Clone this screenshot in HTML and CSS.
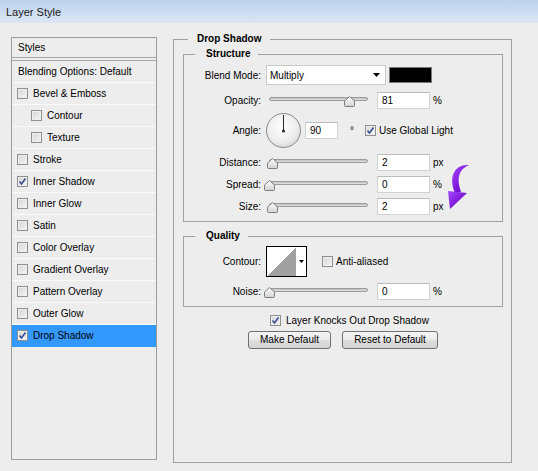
FILE: index.html
```html
<!DOCTYPE html>
<html>
<head>
<meta charset="utf-8">
<title>Layer Style</title>
<link rel="stylesheet" href="styles.css">
</head>
<body>
<div class="titlebar">Layer Style</div>
<div class="main">
  <div class="sidebar">
    <div class="side-head">Styles</div>
    <div class="side-item blend">Blending Options: Default</div>
    <div class="side-item"><span class="cb"></span>Bevel &amp; Emboss</div>
    <div class="side-item sub"><span class="cb"></span>Contour</div>
    <div class="side-item sub"><span class="cb"></span>Texture</div>
    <div class="side-item"><span class="cb"></span>Stroke</div>
    <div class="side-item"><span class="cb"><svg class="tick" width="9" height="9" viewBox="0 0 9 9"><path d="M1.5 4.5 L3.5 7 L7.5 1.5" fill="none" stroke="#3a4e96" stroke-width="1.6"/></svg></span>Inner Shadow</div>
    <div class="side-item"><span class="cb"></span>Inner Glow</div>
    <div class="side-item"><span class="cb"></span>Satin</div>
    <div class="side-item"><span class="cb"></span>Color Overlay</div>
    <div class="side-item"><span class="cb"></span>Gradient Overlay</div>
    <div class="side-item"><span class="cb"></span>Pattern Overlay</div>
    <div class="side-item"><span class="cb"></span>Outer Glow</div>
    <div class="side-item selected"><span class="cb"><svg class="tick" width="9" height="9" viewBox="0 0 9 9"><path d="M1.5 4.5 L3.5 7 L7.5 1.5" fill="none" stroke="#3a4e96" stroke-width="1.6"/></svg></span>Drop Shadow</div>
  </div>

  <fieldset class="group outer">
    <legend>Drop Shadow</legend>
    <div class="outer-body">
      <fieldset class="group inner structure">
        <legend>Structure</legend>
        <div class="inner-body">
          <div class="row r-blend">
            <span class="lbl">Blend Mode:</span>
            <div class="select"><span>Multiply</span><svg width="7" height="4" viewBox="0 0 7 4"><path d="M0 0 H7 L3.5 4 Z" fill="#000"/></svg></div>
            <div class="swatch"></div>
          </div>
          <div class="row r-slider r-opacity">
            <span class="lbl">Opacity:</span>
            <div class="slider"><div class="track"></div><svg class="thumb" style="left:78px" width="11" height="11" viewBox="0 0 11 11"><defs><linearGradient id="tg1" x1="0" y1="0" x2="0" y2="1"><stop offset="0" stop-color="#ffffff"/><stop offset="1" stop-color="#d2d2d2"/></linearGradient></defs><path d="M5.5 0.5 L10.5 5 L10.5 9.5 Q10.5 10.5 9.5 10.5 L1.5 10.5 Q0.5 10.5 0.5 9.5 L0.5 5 Z" fill="url(#tg1)" stroke="#7c7c7c"/></svg></div>
            <div class="num">81</div>
            <span class="unit">%</span>
          </div>
          <div class="row r-angle">
            <span class="lbl">Angle:</span>
            <svg class="dial" width="35" height="35" viewBox="0 0 35 35"><defs><radialGradient id="dg" cx="0.45" cy="0.4" r="0.65"><stop offset="0" stop-color="#ffffff"/><stop offset="0.7" stop-color="#ececec"/><stop offset="1" stop-color="#d4d4d4"/></radialGradient></defs><circle cx="17.5" cy="17.5" r="17" fill="url(#dg)" stroke="#8a8a8a"/><line x1="17.5" y1="2" x2="17.5" y2="17.5" stroke="#2a2a2a" stroke-width="1"/><circle cx="17.5" cy="18" r="1.6" fill="#2a2a2a"/></svg>
            <div class="num num-angle">90</div>
            <span class="deg">°</span>
            <span class="cb cb-global"><svg class="tick" width="9" height="9" viewBox="0 0 9 9"><path d="M1.5 4.5 L3.5 7 L7.5 1.5" fill="none" stroke="#3a4e96" stroke-width="1.6"/></svg></span>
            <span class="cb-label">Use Global Light</span>
          </div>
          <div class="row r-slider r-distance">
            <span class="lbl">Distance:</span>
            <div class="slider"><div class="track"></div><svg class="thumb" style="left:1px" width="11" height="11" viewBox="0 0 11 11"><path d="M5.5 0.5 L10.5 5 L10.5 9.5 Q10.5 10.5 9.5 10.5 L1.5 10.5 Q0.5 10.5 0.5 9.5 L0.5 5 Z" fill="url(#tg1)" stroke="#7c7c7c"/></svg></div>
            <div class="num">2</div>
            <span class="unit">px</span>
          </div>
          <div class="row r-slider">
            <span class="lbl">Spread:</span>
            <div class="slider"><div class="track"></div><svg class="thumb" style="left:-2px" width="11" height="11" viewBox="0 0 11 11"><path d="M5.5 0.5 L10.5 5 L10.5 9.5 Q10.5 10.5 9.5 10.5 L1.5 10.5 Q0.5 10.5 0.5 9.5 L0.5 5 Z" fill="url(#tg1)" stroke="#7c7c7c"/></svg></div>
            <div class="num">0</div>
            <span class="unit">%</span>
          </div>
          <div class="row r-slider">
            <span class="lbl">Size:</span>
            <div class="slider"><div class="track"></div><svg class="thumb" style="left:1px" width="11" height="11" viewBox="0 0 11 11"><path d="M5.5 0.5 L10.5 5 L10.5 9.5 Q10.5 10.5 9.5 10.5 L1.5 10.5 Q0.5 10.5 0.5 9.5 L0.5 5 Z" fill="url(#tg1)" stroke="#7c7c7c"/></svg></div>
            <div class="num">2</div>
            <span class="unit">px</span>
          </div>
        </div>
      </fieldset>

      <fieldset class="group inner quality">
        <legend>Quality</legend>
        <div class="inner-body">
          <div class="row r-contour">
            <span class="lbl">Contour:</span>
            <div class="contour"><div class="contour-preview"></div><div class="contour-drop"><svg width="5" height="3" viewBox="0 0 5 3"><path d="M0 0 H5 L2.5 3 Z" fill="#000"/></svg></div></div>
            <span class="cb cb-anti"></span>
            <span class="cb-label">Anti-aliased</span>
          </div>
          <div class="row r-slider r-noise">
            <span class="lbl">Noise:</span>
            <div class="slider"><div class="track"></div><svg class="thumb" style="left:-2px" width="11" height="11" viewBox="0 0 11 11"><path d="M5.5 0.5 L10.5 5 L10.5 9.5 Q10.5 10.5 9.5 10.5 L1.5 10.5 Q0.5 10.5 0.5 9.5 L0.5 5 Z" fill="url(#tg1)" stroke="#7c7c7c"/></svg></div>
            <div class="num">0</div>
            <span class="unit">%</span>
          </div>
        </div>
      </fieldset>

      <div class="row r-knock">
        <span class="cb"><svg class="tick" width="9" height="9" viewBox="0 0 9 9"><path d="M1.5 4.5 L3.5 7 L7.5 1.5" fill="none" stroke="#3a4e96" stroke-width="1.6"/></svg></span>
        <span class="cb-label knock-label">Layer Knocks Out Drop Shadow</span>
      </div>
      <div class="buttons">
        <div class="btn btn-make">Make Default</div>
        <div class="btn btn-reset">Reset to Default</div>
      </div>
    </div>
  </fieldset>
</div>

<svg class="annot" width="30" height="50" viewBox="0 0 30 50">
  <defs>
    <linearGradient id="ag" x1="0" y1="0" x2="1" y2="1">
      <stop offset="0" stop-color="#a64dff"/>
      <stop offset="0.6" stop-color="#7a12d6"/>
      <stop offset="1" stop-color="#5a08a8"/>
    </linearGradient>
  </defs>
  <path d="M25 3 C11 2 4 14 11 31 L17 30 C12 16 15 7 25 3 Z" fill="url(#ag)"/>
  <path d="M4 29 L23 31 L6 47 Z" fill="url(#ag)"/>
</svg>
</body>
</html>
```
FILE: styles.css
```css
* {
  box-sizing: border-box;
}

html, body {
  margin: 0;
  padding: 0;
}

body {
  position: relative;
  width: 538px;
  height: 471px;
  overflow: hidden;
  background: #ededed;
  font-family: "Liberation Sans", Arial, sans-serif;
  font-size: 10px;
  color: #000;
}

.titlebar {
  height: 23px;
  padding-left: 6px;
  background: linear-gradient(#bdd2ed, #dbe6f4);
  font-size: 11px;
  line-height: 25px;
  color: #1a1a1a;
}

.main {
  display: flex;
  align-items: flex-start;
  padding-left: 11px;
}

/* ---------- sidebar ---------- */
.sidebar {
  width: 146px;
  height: 423px;
  margin-top: 14px;
  border: 1px solid #9d9d9d;
  flex: none;
}

.side-head {
  height: 20px;
  padding-left: 6px;
  line-height: 19px;
  border-bottom: 1px solid #a6a6a6;
}

.side-item {
  display: flex;
  align-items: center;
  height: 22px;
  padding-left: 5px;
  border-bottom: 1px solid #fafafa;
}

.side-item.blend {
  height: 23px;
  margin-top: 2px;
  padding-left: 6px;
  border-top: 1px solid #a6a6a6;
}

.side-item.sub {
  padding-left: 19px;
}

.side-item.selected {
  background: #3399ff;
  border-bottom-color: #3399ff;
}

.side-item .cb {
  margin-right: 5px;
}

/* ---------- checkbox ---------- */
.cb {
  display: inline-flex;
  align-items: center;
  justify-content: center;
  flex: none;
  width: 11px;
  height: 11px;
  border: 1px solid #8f8f8f;
  background: linear-gradient(135deg, #d4d4d4, #f6f6f6);
  box-shadow: inset 0 0 0 1px #efefef;
}

.tick {
  display: block;
}

.cb-label {
  margin-left: 3px;
  white-space: nowrap;
}

/* ---------- fieldsets ---------- */
.group {
  margin: 0;
  padding: 0;
  min-width: 0;
  border: 1px solid #a0a0a0;
}

.group > legend {
  margin-left: 14px;
  padding: 0 9px;
  font-size: 10px;
  font-weight: bold;
  line-height: 12px;
}

.outer {
  width: 339px;
  height: 430px;
  margin-top: 10px;
  margin-left: 16px;
  flex: none;
}

.outer-body {
  padding: 3px 8px 0 9px;
}

.inner {
  width: 320px;
}

.inner > legend {
  margin-left: 11px;
  padding: 0 8px 0 11px;
}

.structure .inner-body {
  padding: 5px 0 4px 0;
}

.quality {
  margin-top: 8px;
}

.quality .inner-body {
  padding: 4px 0 4px 0;
}

/* ---------- rows ---------- */
.row {
  display: flex;
  align-items: center;
}

.lbl {
  flex: none;
  width: 77px;
  margin-right: 5px;
  text-align: right;
  white-space: nowrap;
}

.r-blend {
  height: 20px;
}

.r-slider {
  height: 22px;
}

.r-opacity {
  margin-top: 4px;
}

.r-angle {
  height: 36px;
  margin-top: 1px;
}

.r-distance {
  margin-top: 3px;
}

.r-contour {
  height: 31px;
}

.r-noise {
  margin-top: 3px;
}

.select {
  display: flex;
  align-items: center;
  justify-content: space-between;
  flex: none;
  width: 120px;
  height: 20px;
  padding: 0 5px 0 3px;
  background: #fff;
  border: 1px solid #cacaca;
}

.swatch {
  flex: none;
  width: 43px;
  height: 16px;
  margin-left: 3px;
  background: #000;
  border: 1px solid #7a7a7a;
}

.slider {
  position: relative;
  flex: none;
  width: 111px;
  height: 17px;
}

.track {
  width: 99px;
  height: 4px;
  margin: 5px 0 0 3px;
  border: 1px solid #9b9b9b;
  border-radius: 3px;
  background: linear-gradient(#bdbdbd, #e4e4e4);
}

.thumb {
  position: absolute;
  top: 4px;
}

.num {
  flex: none;
  width: 53px;
  height: 17px;
  padding-left: 4px;
  line-height: 15px;
  background: #fff;
  border: 1px solid #d2d2d2;
  border-top-color: #bcbcbc;
}

.unit {
  margin-left: 3px;
}

.dial {
  display: block;
  flex: none;
}

.num.num-angle {
  width: 33px;
  margin-left: 4px;
}

.deg {
  margin-left: 12px;
}

.cb-global {
  margin-left: 11px;
}

.contour {
  display: flex;
  flex: none;
  width: 41px;
  height: 31px;
  background: #fff;
  border: 1px solid #000;
}

.contour-preview {
  width: 29px;
  height: 29px;
  background: linear-gradient(to top left, #a0a0a0 50%, #ffffff 50%);
}

.contour-drop {
  display: flex;
  align-items: center;
  justify-content: center;
  flex: 1;
}

.cb-anti {
  margin-left: 15px;
}

.r-knock {
  height: 16px;
  margin: 5px 0 0 87px;
}

.knock-label {
  margin-left: 5px;
}

.buttons {
  display: flex;
  gap: 11px;
  margin: 3px 0 0 65px;
}

.btn {
  height: 18px;
  line-height: 16px;
  text-align: center;
  border: 1px solid #707070;
  border-radius: 3px;
  background: linear-gradient(#f4f4f4, #ebebeb 50%, #dedede 51%, #d3d3d3);
}

.btn-make {
  width: 83px;
}

.btn-reset {
  width: 96px;
}

/* annotation arrow drawn over the dialog */
.annot {
  position: absolute;
  left: 444px;
  top: 162px;
}
```
